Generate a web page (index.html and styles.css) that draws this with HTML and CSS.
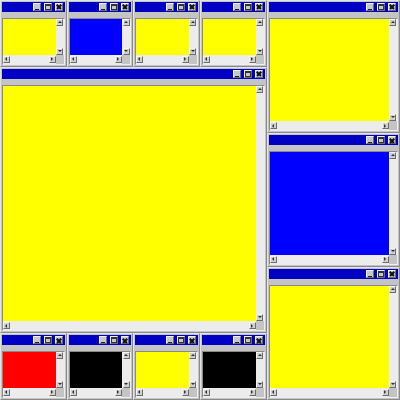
FILE: index.html
```html
<!DOCTYPE html>
<html>
<head>
<meta charset="utf-8">
<link rel="stylesheet" href="styles.css">
</head>
<body>
<div class="desktop">
  <div class="win a1"><div class="title"><span class="tb min"></span><span class="tb max"></span><span class="tb cls"></span></div><div class="client"><div class="view yellow"></div><div class="vbar"><span class="arr up"></span><span class="arr down"></span></div><div class="hbar"><span class="arr left"></span><span class="arr right"></span></div><div class="corner"></div></div></div>
  <div class="win a2"><div class="title"><span class="tb min"></span><span class="tb max"></span><span class="tb cls"></span></div><div class="client"><div class="view blue"></div><div class="vbar"><span class="arr up"></span><span class="arr down"></span></div><div class="hbar"><span class="arr left"></span><span class="arr right"></span></div><div class="corner"></div></div></div>
  <div class="win a3"><div class="title"><span class="tb min"></span><span class="tb max"></span><span class="tb cls"></span></div><div class="client"><div class="view yellow"></div><div class="vbar"><span class="arr up"></span><span class="arr down"></span></div><div class="hbar"><span class="arr left"></span><span class="arr right"></span></div><div class="corner"></div></div></div>
  <div class="win a4"><div class="title"><span class="tb min"></span><span class="tb max"></span><span class="tb cls"></span></div><div class="client"><div class="view yellow"></div><div class="vbar"><span class="arr up"></span><span class="arr down"></span></div><div class="hbar"><span class="arr left"></span><span class="arr right"></span></div><div class="corner"></div></div></div>
  <div class="win r1"><div class="title"><span class="tb min"></span><span class="tb max"></span><span class="tb cls"></span></div><div class="client"><div class="view yellow"></div><div class="vbar"><span class="arr up"></span><span class="arr down"></span></div><div class="hbar"><span class="arr left"></span><span class="arr right"></span></div><div class="corner"></div></div></div>
  <div class="win big"><div class="title"><span class="tb min"></span><span class="tb max"></span><span class="tb cls"></span></div><div class="client"><div class="view yellow"></div><div class="vbar"><span class="arr up"></span><span class="arr down"></span></div><div class="hbar"><span class="arr left"></span><span class="arr right"></span></div><div class="corner"></div></div></div>
  <div class="win r2"><div class="title"><span class="tb min"></span><span class="tb max"></span><span class="tb cls"></span></div><div class="client"><div class="view blue"></div><div class="vbar"><span class="arr up"></span><span class="arr down"></span></div><div class="hbar"><span class="arr left"></span><span class="arr right"></span></div><div class="corner"></div></div></div>
  <div class="win r3"><div class="title"><span class="tb min"></span><span class="tb max"></span><span class="tb cls"></span></div><div class="client"><div class="view yellow"></div><div class="vbar"><span class="arr up"></span><span class="arr down"></span></div><div class="hbar"><span class="arr left"></span><span class="arr right"></span></div><div class="corner"></div></div></div>
  <div class="win b1"><div class="title"><span class="tb min"></span><span class="tb max"></span><span class="tb cls"></span></div><div class="client"><div class="view red"></div><div class="vbar"><span class="arr up"></span><span class="arr down"></span></div><div class="hbar"><span class="arr left"></span><span class="arr right"></span></div><div class="corner"></div></div></div>
  <div class="win b2"><div class="title"><span class="tb min"></span><span class="tb max"></span><span class="tb cls"></span></div><div class="client"><div class="view black"></div><div class="vbar"><span class="arr up"></span><span class="arr down"></span></div><div class="hbar"><span class="arr left"></span><span class="arr right"></span></div><div class="corner"></div></div></div>
  <div class="win b3"><div class="title"><span class="tb min"></span><span class="tb max"></span><span class="tb cls"></span></div><div class="client"><div class="view yellow"></div><div class="vbar"><span class="arr up"></span><span class="arr down"></span></div><div class="hbar"><span class="arr left"></span><span class="arr right"></span></div><div class="corner"></div></div></div>
  <div class="win b4"><div class="title"><span class="tb min"></span><span class="tb max"></span><span class="tb cls"></span></div><div class="client"><div class="view black"></div><div class="vbar"><span class="arr up"></span><span class="arr down"></span></div><div class="hbar"><span class="arr left"></span><span class="arr right"></span></div><div class="corner"></div></div></div>
</div>
</body>
</html>
```
FILE: styles.css
```css
html, body { margin: 0; padding: 0; background: #c4c4c4; }
.desktop {
  width: 400px; height: 400px;
  display: grid;
  grid-template-columns: repeat(6, 1fr);
  grid-template-rows: repeat(6, 1fr);
  background: #c4c4c4;
}
.a1 { grid-area: 1 / 1 / 2 / 2; }
.a2 { grid-area: 1 / 2 / 2 / 3; }
.a3 { grid-area: 1 / 3 / 2 / 4; }
.a4 { grid-area: 1 / 4 / 2 / 5; }
.r1 { grid-area: 1 / 5 / 3 / 7; }
.big { grid-area: 2 / 1 / 6 / 5; }
.r2 { grid-area: 3 / 5 / 5 / 7; }
.r3 { grid-area: 5 / 5 / 7 / 7; }
.b1 { grid-area: 6 / 1 / 7 / 2; }
.b2 { grid-area: 6 / 2 / 7 / 3; }
.b3 { grid-area: 6 / 3 / 7 / 4; }
.b4 { grid-area: 6 / 4 / 7 / 5; }

.win {
  box-sizing: border-box;
  min-width: 0; min-height: 0;
  background: #c4c4c4;
  border: 1px solid;
  border-color: #e4e4e4 #8a8a8a #8a8a8a #e4e4e4;
  padding: 1px;
  display: flex;
  flex-direction: column;
}
.title {
  height: 10px;
  flex: none;
  background: #0000c4;
  display: flex;
  justify-content: flex-end;
  align-items: center;
  gap: 3px;
  padding-right: 2px;
  margin-bottom: 6px;
}
.tb {
  box-sizing: border-box;
  width: 8px; height: 8px;
  background: #c8c8c8;
  border: 1px solid;
  border-color: #f0f0f0 #6c6c6c #6c6c6c #f0f0f0;
  position: relative;
}
.min::after {
  content: ""; position: absolute;
  left: 1px; width: 4px; bottom: 0px; height: 1px;
  background: #222;
}
.max::after {
  content: ""; position: absolute;
  left: 0px; top: 0px; width: 6px; height: 6px;
  box-sizing: border-box;
  border: 1px solid #333; border-top-width: 2px;
}
.cls::before, .cls::after {
  content: ""; position: absolute;
  left: 0px; top: 2.25px; width: 6px; height: 1.5px;
  background: #111;
  transform: rotate(45deg);
}
.cls::after { transform: rotate(-45deg); }

.client {
  flex: 1;
  min-height: 0;
  border: 1px solid;
  border-color: #8a8a8a #eeeeee #eeeeee #8a8a8a;
  display: grid;
  grid-template-columns: 1fr 8px;
  grid-template-rows: 1fr 9px;
}
.view { min-width: 0; min-height: 0; }
.yellow { background: #ffff00; }
.blue { background: #0000ff; }
.red { background: #ff0000; }
.black { background: #000000; }

.vbar {
  background: #ececec;
  display: flex;
  flex-direction: column;
  justify-content: space-between;
  align-items: center;
}
.hbar {
  background: #ececec;
  display: flex;
  justify-content: space-between;
  align-items: center;
}
.corner { background: #c4c4c4; }

.arr {
  box-sizing: border-box;
  width: 7px; height: 7px;
  background: #d0d0d0;
  border: 1px solid;
  border-color: #f4f4f4 #6c6c6c #6c6c6c #f4f4f4;
  position: relative;
}
.arr::after {
  content: ""; position: absolute;
  width: 0; height: 0;
  border: 2px solid transparent;
}
.up::after { left: 0.5px; top: -1px; border-bottom-color: #333; }
.down::after { left: 0.5px; top: 1px; border-top-color: #333; }
.left::after { top: 0.5px; left: -1px; border-right-color: #333; }
.right::after { top: 0.5px; left: 1px; border-left-color: #333; }
```
